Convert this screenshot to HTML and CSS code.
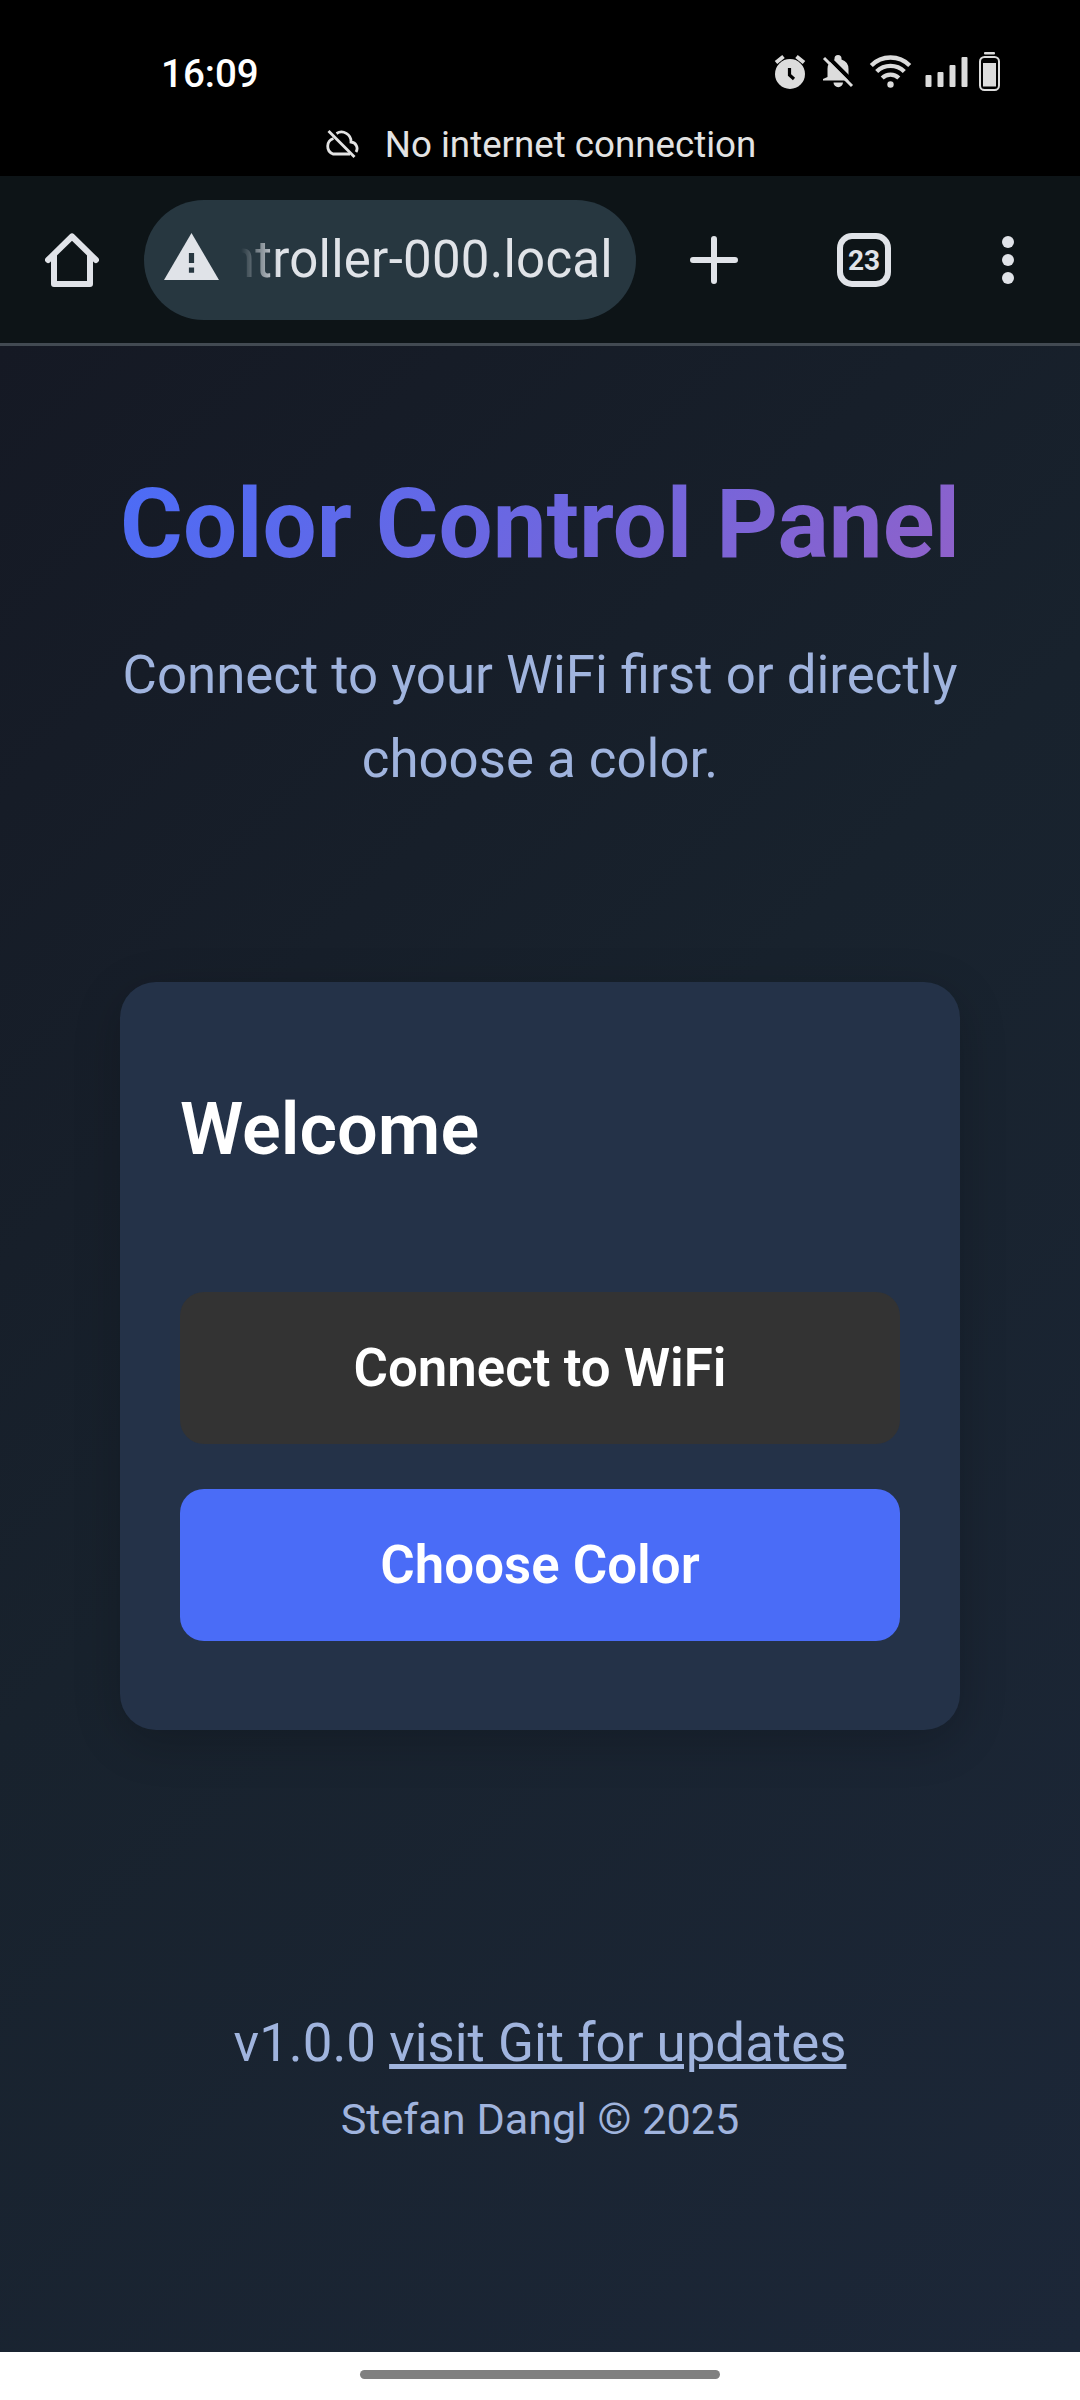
FILE: index.html
```html
<!DOCTYPE html>
<html lang="en">
<head>
<meta charset="utf-8">
<title>Color Control Panel</title>
<link rel="stylesheet" href="styles.css">
</head>
<body>
<div class="phone">
  <header class="status">
    <div class="status-row">
      <span class="clock">16:09</span>
      <svg class="status-icons" width="236" height="48" viewBox="770 48 236 48" fill="#dcdcdc">
        <circle cx="790" cy="74" r="15"/>
        <path d="M776 62.500l7.500-6M804 62.500l-7.500-6" stroke="#dcdcdc" stroke-width="4" fill="none"/>
        <path d="M789.500 68v7l4.500 4" stroke="#000" stroke-width="3.200" fill="none"/>
        <path d="M827.500 77V69a10 10 0 0 1 7-9.500V58.500a3.500 3.500 0 0 1 7 0V59.500a10 10 0 0 1 7 9.500v8l4.500 3.500H823v-1.500zM833.500 82.500h9.500a4.700 4.700 0 0 1-9.500 0z"/>
        <path d="M826.500 55.500L855.500 84.500" stroke="#000" stroke-width="4"/>
        <path d="M824 58L852 86" stroke="#dcdcdc" stroke-width="3"/>
        <circle cx="890.500" cy="84.500" r="3.200"/>
        <g fill="none" stroke="#dcdcdc" stroke-width="4.300">
          <path d="M871.300 65.500a27 27 0 0 1 38.400 0"/>
          <path d="M876.700 71.500a19.500 19.500 0 0 1 27.600 0"/>
          <path d="M882.200 78a12 12 0 0 1 16.600 0"/>
        </g>
        <rect x="925.500" y="75" width="6" height="12" rx="1"/>
        <rect x="937.500" y="72" width="6" height="15" rx="1"/>
        <rect x="949.500" y="65" width="6" height="22" rx="1"/>
        <rect x="961.500" y="57" width="6" height="30" rx="1"/>
        <rect x="984" y="52" width="11" height="2.500" rx="1"/>
        <rect x="980" y="57" width="19" height="33" rx="4.500" fill="none" stroke="#dcdcdc" stroke-width="2"/>
        <rect x="983" y="63" width="13" height="23.500"/>
      </svg>
    </div>
    <div class="offline">
      <svg width="36" height="30" viewBox="0 0 36 30" fill="none" stroke="#e3e3e3" stroke-width="2.800">
        <path d="M4.500 2l26 26"/>
        <path d="M9.500 9.500a8.200 8.200 0 0 0-.5 15.500h17"/>
        <path d="M12.500 4.500a9.500 9.500 0 0 1 14.500 8.500 6.500 6.500 0 0 1 5 10"/>
      </svg>
      <span>No internet connection</span>
    </div>
  </header>

  <nav class="toolbar">
    <svg class="home" width="54" height="54" viewBox="0 0 54 54" fill="none" stroke="#e0e3e8" stroke-width="6" stroke-linecap="round" stroke-linejoin="round">
      <path d="M3 27L27 3.500 51 27"/>
      <path d="M9 22.500v28.500h36V22.500"/>
    </svg>
    <div class="address">
      <svg width="55" height="47" viewBox="0 0 55 47"><path d="M27.500 0L55 47H0z" fill="#e0e3e8"/><path d="M24.900 20h5.200v10h-5.200zM24.900 34.500h5.200v5.200h-5.200z" fill="#273740"/></svg>
      <span class="url"><span class="url-text">ntroller-000.local</span></span>
    </div>
    <svg class="plus" width="48" height="48" viewBox="0 0 48 48" stroke="#e0e3e8" stroke-width="6" stroke-linecap="round"><path d="M24 3v42M3 24h42"/></svg>
    <span class="tabs">23</span>
    <svg class="dots" width="12" height="48" viewBox="0 0 12 48" fill="#e0e3e8"><circle cx="6" cy="6" r="6"/><circle cx="6" cy="24" r="6"/><circle cx="6" cy="42" r="6"/></svg>
  </nav>

  <main class="page">
    <h1 class="title">Color Control Panel</h1>
    <p class="subtitle">Connect to your WiFi first or directly choose a color.</p>
    <section class="card">
      <h2 class="card-title">Welcome</h2>
      <button class="btn">Connect to WiFi</button>
      <button class="btn primary">Choose Color</button>
    </section>
    <footer class="footer">
      <p class="version">v1.0.0 <a href="#">visit Git for updates</a></p>
      <p class="copyright">Stefan Dangl © 2025</p>
    </footer>
  </main>

  <div class="gesture"><span class="handle"></span></div>
</div>
</body>
</html>
```
FILE: styles.css
```css
* { box-sizing: border-box; margin: 0; padding: 0; }

body { font-family: Roboto, sans-serif; background: #000; }

.phone {
  width: 1080px;
  height: 2400px;
  display: flex;
  flex-direction: column;
  overflow: hidden;
}

.status { height: 176px; flex: none; background: #000; color: #e3e3e3; padding-top: 48px; }
.status-row { height: 48px; display: flex; justify-content: space-between; align-items: center; padding: 0 74px 0 161px; }
.clock { color: #fff; font-size: 38.500px; font-weight: 500; line-height: 48px; padding-top: 3px; }
.status-icons { display: block; }
.offline { display: flex; align-items: center; justify-content: center; gap: 25px; height: 46px; margin-top: 25px; font-size: 36.700px; white-space: nowrap; }

.toolbar {
  height: 170px;
  flex: none;
  display: flex;
  align-items: center;
  background: #0d1417;
  border-bottom: 3px solid #424a52;
  padding-top: 1px;
}
.home { margin-left: 45px; }
.address {
  width: 492px;
  height: 120px;
  margin-left: 45px;
  padding-left: 20px;
  border-radius: 60px;
  background: #273740;
  display: flex;
  align-items: center;
}
.address svg { margin-bottom: 7px; }
.url {
  width: 372px;
  margin-left: 22px;
  overflow: hidden;
  display: flex;
  justify-content: flex-end;
  mask-image: linear-gradient(to right, transparent, #000 38px);
}
.url-text { color: #e0e3e8; font-size: 51px; line-height: 70px; letter-spacing: .25px; white-space: nowrap; }
.plus { margin-left: 54px; }
.tabs {
  width: 54px;
  height: 54px;
  margin-left: 99px;
  border: 6px solid #e0e3e8;
  border-radius: 15px;
  color: #e0e3e8;
  font-size: 28px;
  font-weight: 700;
  line-height: 43px;
  text-align: center;
}
.dots { margin-left: 111px; }

.page {
  flex: 1;
  padding: 122px 120px 0;
  background: linear-gradient(135deg, #151924 0%, #18222d 45%, #1c2738 100%);
  color: #a0b4de;
}
.title {
  width: 840px;
  font-size: 96px;
  font-weight: 700;
  line-height: 112px;
  white-space: nowrap;
  text-align: center;
  color: transparent;
  background: linear-gradient(135deg, #4a6cf7, #9061c9);
  background-clip: text;
}
.subtitle { margin-top: 53px; font-size: 52.800px; line-height: 84.480px; text-align: center; }
.card {
  height: 748px;
  margin-top: 180px;
  padding: 90px 60px 0;
  border-radius: 36px;
  background: #243248;
  box-shadow: 0 12px 48px rgba(0, 0, 0, .2);
}
.card-title { height: 115px; margin-bottom: 105px; color: #fff; font-size: 72px; font-weight: 600; line-height: 115px; }
.btn {
  display: block;
  width: 100%;
  height: 152px;
  margin-bottom: 45px;
  border: 0;
  border-radius: 24px;
  background: #333;
  color: #fff;
  font: 600 52.800px/152px Roboto, sans-serif;
}
.primary { background: #4a6cf7; }
.footer { margin-top: 271px; text-align: center; }
.version { font-size: 52.800px; line-height: 84.480px; }
.version a { color: inherit; text-decoration: underline; }
.copyright { font-size: 43.200px; line-height: 69px; }

.gesture { height: 48px; flex: none; background: #fff; display: flex; justify-content: center; }
.handle { width: 360px; height: 9px; margin-top: 18px; border-radius: 5px; background: #808080; }
```
